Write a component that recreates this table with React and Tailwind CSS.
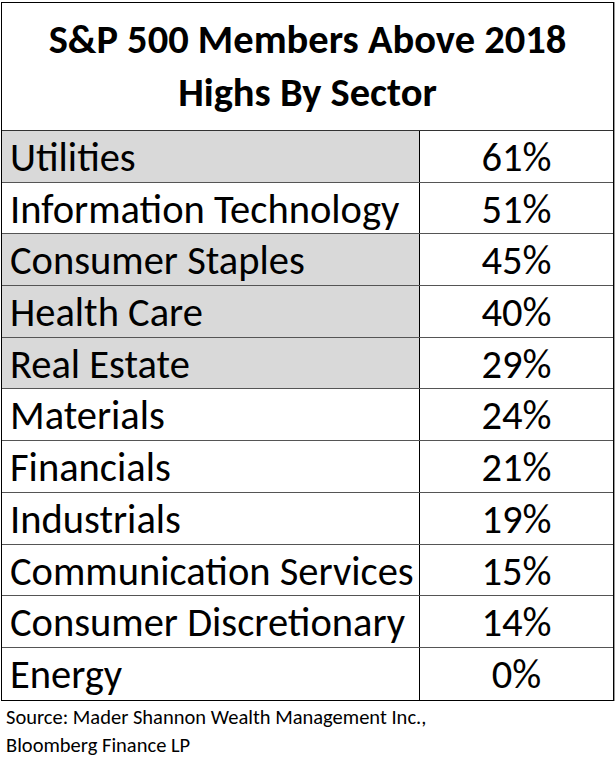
const rows = [
  { sector: "Utilities", pct: "61%", shaded: true },
  { sector: "Information Technology", pct: "51%", shaded: false },
  { sector: "Consumer Staples", pct: "45%", shaded: true },
  { sector: "Health Care", pct: "40%", shaded: true },
  { sector: "Real Estate", pct: "29%", shaded: true },
  { sector: "Materials", pct: "24%", shaded: false },
  { sector: "Financials", pct: "21%", shaded: false },
  { sector: "Industrials", pct: "19%", shaded: false },
  { sector: "Communication Services", pct: "15%", shaded: false },
  { sector: "Consumer Discretionary", pct: "14%", shaded: false },
  { sector: "Energy", pct: "0%", shaded: false },
];

export default function App() {
  return (
    <div className="w-[616px] h-[757px] bg-white text-black font-['Carlito','Calibri','Open_Sans',sans-serif] overflow-hidden">
      <div className="ml-[1px] mt-[2px] w-[613px] border border-black shadow-[1px_0_0_#9a9a9a]">
        {/* Title */}
        <div className="h-[128px] flex flex-col items-center pt-[10px] border-b border-[#333]">
          <p className="text-[40.5px] font-bold leading-[53px]">S&amp;P 500 Members Above 2018</p>
          <p className="text-[40.5px] font-bold leading-[53px]">Highs By Sector</p>
        </div>

        {rows.map((row, i) => (
          <div
            key={row.sector}
            className={`grid grid-cols-[418px_1fr] h-[51.7px] ${i < rows.length - 1 ? "border-b border-[#555]" : ""}`}
          >
            <div className={`pl-[8px] pt-[6px] border-r border-black ${row.shaded ? "bg-[#d9d9d9]" : ""}`}>
              <span className="block text-[40.5px] leading-none whitespace-nowrap">{row.sector}</span>
            </div>
            <div className="pt-[6px] text-center">
              <span className="block text-[40.5px] leading-none">{row.pct}</span>
            </div>
          </div>
        ))}
      </div>

      <div className="pl-[6px] pt-[2px] text-[20.5px] leading-[28.5px]">
        <p>Source: Mader Shannon Wealth Management Inc.,</p>
        <p>Bloomberg Finance LP</p>
      </div>
    </div>
  );
}
